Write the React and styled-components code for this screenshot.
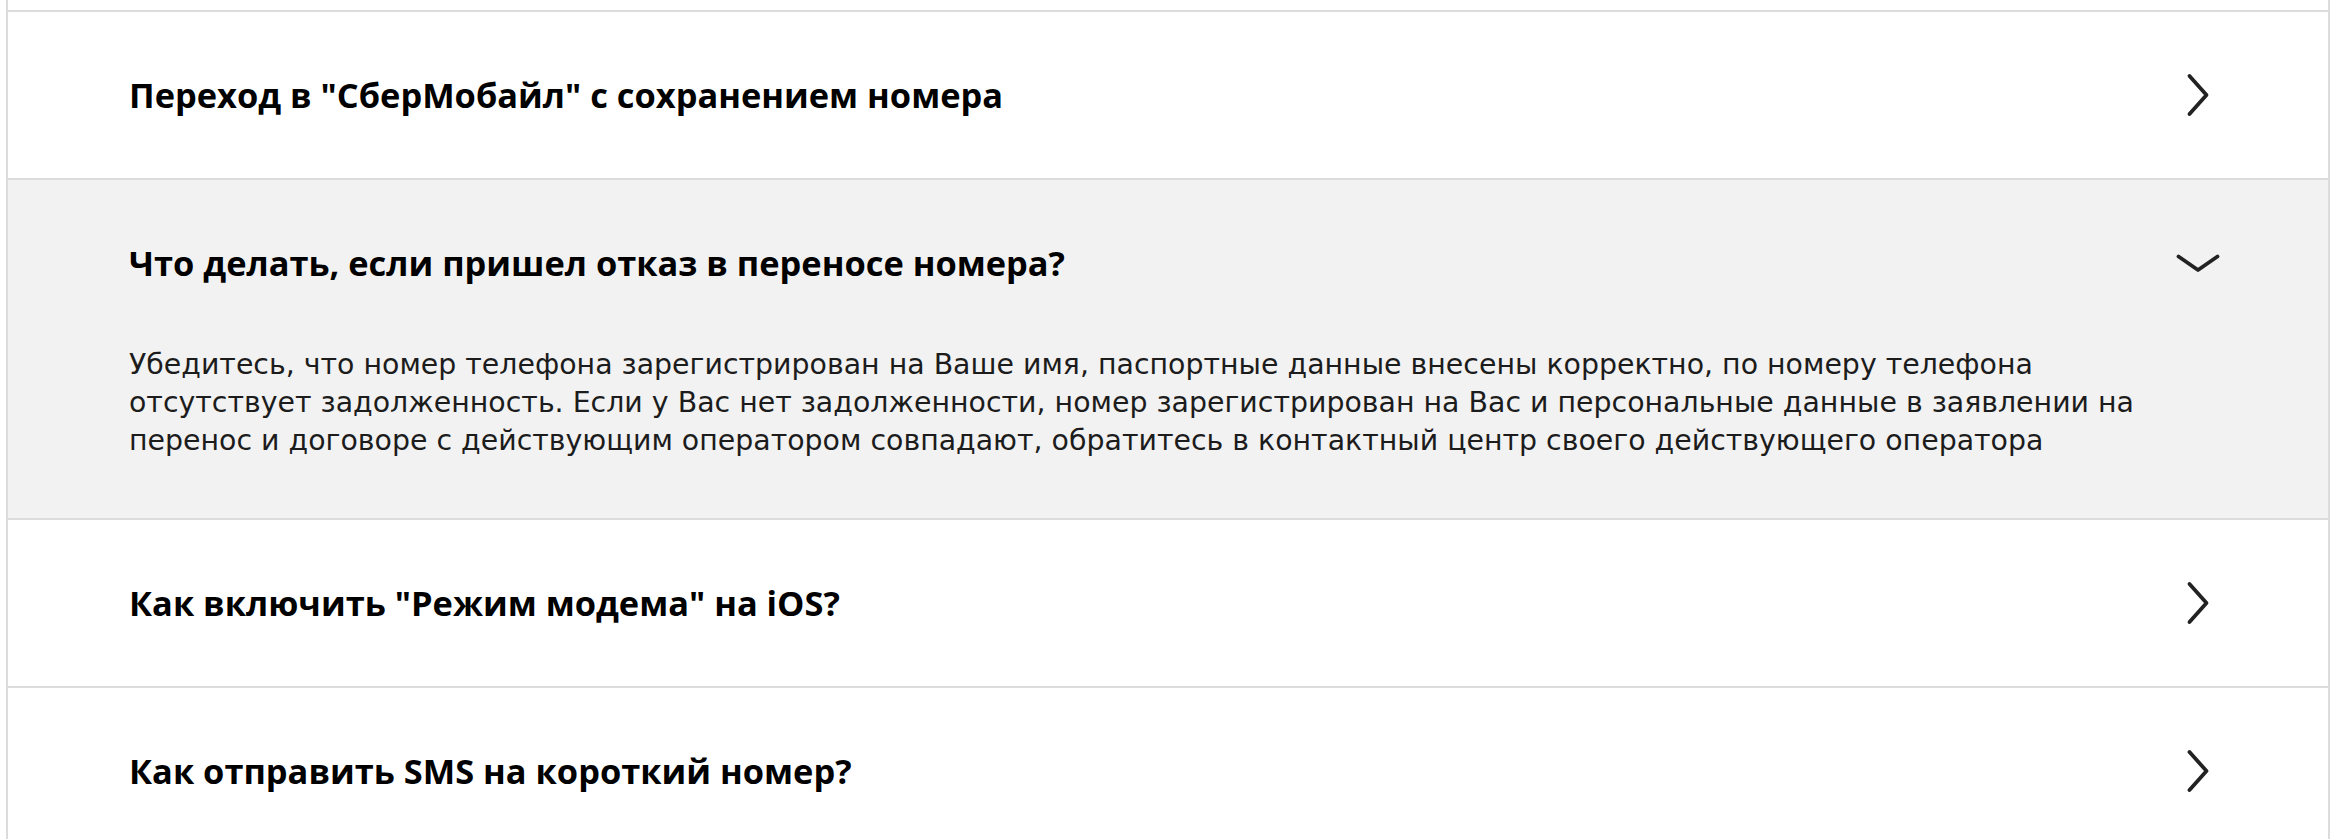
import React from "react";
import styled, { createGlobalStyle } from "styled-components";

const GlobalStyle = createGlobalStyle`
  html, body {
    margin: 0;
    background: #ffffff;
  }
  body {
    font-family: "Open Sans", "Noto Sans", sans-serif;
    color: #000000;
  }
`;

const Page = styled.div`
  padding: 0 14px 0 6px;
`;

const List = styled.div`
  border-left: 2px solid #dcdcdc;
  border-right: 2px solid #dcdcdc;
  padding-top: 10px;
`;

const Item = styled.div`
  border-top: 2px solid #dcdcdc;
  background: ${(p) => (p.open ? "#f2f2f2" : "#ffffff")};
`;

const Header = styled.div`
  display: flex;
  align-items: center;
  justify-content: space-between;
  height: 166px;
  padding: 0 106px 0 121px;
  cursor: pointer;
`;

const Title = styled.h3`
  margin: 0;
  font-family: "Open Sans", "Noto Sans", sans-serif;
  font-weight: 700;
  font-size: 34.4px;
  line-height: 46px;
  color: #000000;
`;

const Body = styled.p`
  margin: 0;
  padding: 0 172px 58px 121px;
  font-family: "DejaVu Sans", "Noto Sans", sans-serif;
  font-size: 28.4px;
  line-height: 38px;
  color: #1c1c1c;
`;

const Chevron = ({ open }) => (
  <svg width="48" height="48" viewBox="0 0 48 48" fill="none">
    <path
      d={open ? "M4.5 17.5 L24 31 L43.5 17.5" : "M15.5 5 L32.5 24 L15.5 43"}
      stroke="#222222"
      strokeWidth="3.8"
      strokeLinecap="round"
      strokeLinejoin="round"
    />
  </svg>
);

const items = [
  { title: 'Переход в "СберМобайл" с сохранением номера' },
  {
    title: "Что делать, если пришел отказ в переносе номера?",
    text:
      "Убедитесь, что номер телефона зарегистрирован на Ваше имя, паспортные данные внесены корректно, по номеру телефона отсутствует задолженность. Если у Вас нет задолженности, номер зарегистрирован на Вас и персональные данные в заявлении на перенос и договоре с действующим оператором совпадают, обратитесь в контактный центр своего действующего оператора",
    open: true,
  },
  { title: 'Как включить "Режим модема" на iOS?' },
  { title: "Как отправить SMS на короткий номер?" },
];

export default function App() {
  return (
    <Page>
      <GlobalStyle />
      <List>
        {items.map((item) => (
          <Item key={item.title} open={item.open}>
            <Header>
              <Title>{item.title}</Title>
              <Chevron open={item.open} />
            </Header>
            {item.open && <Body>{item.text}</Body>}
          </Item>
        ))}
      </List>
    </Page>
  );
}
